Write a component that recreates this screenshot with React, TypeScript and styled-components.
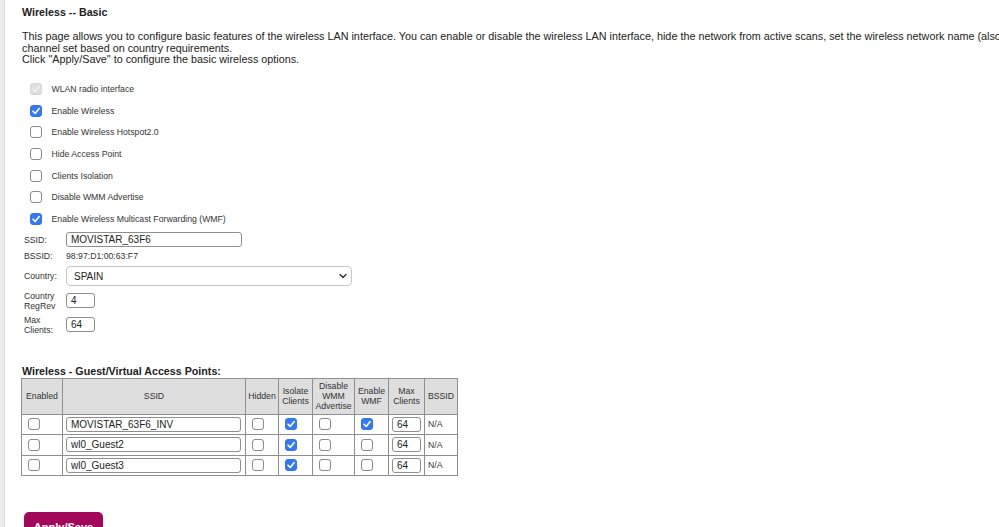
import React from 'react';
import styled, { createGlobalStyle } from 'styled-components';

const Global = createGlobalStyle`
  html, body { margin: 0; padding: 0; background: #fff; overflow: hidden; }
  body { font-family: "Liberation Sans", Arial, sans-serif; }
`;

const Page = styled.div`
  display: flex;
  width: 999px;
  height: 527px;
  overflow: hidden;
`;

const Strip = styled.div`
  width: 4px;
  flex: none;
  background: #ebebee;
  border-right: 1px solid #dcdcdf;
`;

const Main = styled.main`
  flex: 1;
  min-width: 0;
  padding: 5px 0 0 17px;
  display: flex;
  flex-direction: column;
`;

const Title = styled.h1`
  margin: 0;
  font-size: 10.7px;
  line-height: 14px;
  font-weight: bold;
  color: #222;
`;

const Intro = styled.p`
  margin: 12px 0 0;
  font-size: 10.8px;
  line-height: 11.7px;
  white-space: nowrap;
  color: #222;
`;

const CheckList = styled.div`
  margin-top: 12px;
  display: flex;
  flex-direction: column;
`;

const CheckRow = styled.label`
  height: 21.67px;
  display: flex;
  align-items: center;
  gap: 10px;
  padding-left: 7.5px;
  font-size: 8.7px;
  color: #333;
`;

const Box = styled.span<{ $on?: boolean; $disabled?: boolean; $cell?: boolean }>`
  width: 12px;
  height: 12px;
  box-sizing: border-box;
  border-radius: 3px;
  flex: none;
  display: inline-flex;
  align-items: center;
  justify-content: center;
  vertical-align: middle;
  margin-left: ${p => (p.$cell ? '3px' : '0')};
  border: 1px solid ${p => (p.$disabled ? '#d6d6d6' : p.$on ? '#2f74ee' : '#8a8a8a')};
  background: ${p => (p.$disabled ? '#dedede' : p.$on ? '#3478f6' : '#fff')};
`;

const Check: React.FC<{ on?: boolean; disabled?: boolean; cell?: boolean }> = ({ on, disabled, cell }) => (
  <Box $on={on} $disabled={disabled} $cell={cell}>
    {on && (
      <svg width="10" height="10" viewBox="0 0 10 10">
        <path
          d="M2 5.2 L4.2 7.4 L8.2 2.6"
          fill="none"
          stroke={disabled ? '#f4f4f4' : '#fff'}
          strokeWidth="1.6"
          strokeLinecap="round"
          strokeLinejoin="round"
        />
      </svg>
    )}
  </Box>
);

const Form = styled.div`
  margin-top: 1px;
  padding-left: 2px;
  display: grid;
  grid-template-columns: 42px auto;
  grid-template-rows: 18px 14px 26px 24px 24px;
  align-items: center;
  justify-items: start;
`;

const FieldLabel = styled.span`
  font-size: 8.7px;
  line-height: 10px;
  color: #333;
`;

const Value = styled.span`
  font-size: 8.7px;
  color: #333;
`;

const TextBox = styled.input<{ $w: number }>`
  width: ${p => p.$w}px;
  height: 15px;
  box-sizing: border-box;
  border: 1px solid #8e8e8e;
  border-radius: 3px;
  padding: 0 4px;
  font-family: "Liberation Sans", Arial, sans-serif;
  font-size: 10px;
  color: #222;
  background: #fff;
  outline: none;
`;

const SelectWrap = styled.span`
  position: relative;
  display: inline-block;
  width: 286px;
  height: 20px;
`;

const Select = styled.select`
  appearance: none;
  -webkit-appearance: none;
  width: 100%;
  height: 100%;
  box-sizing: border-box;
  border: 1px solid #c9c9c9;
  border-radius: 4px;
  padding: 0 7px;
  font-family: "Liberation Sans", Arial, sans-serif;
  font-size: 10px;
  color: #222;
  background: #fff;
`;

const Chevron = styled.svg`
  position: absolute;
  right: 5px;
  top: 7px;
  pointer-events: none;
`;

const SectionTitle = styled.h2`
  margin: 27px 0 0;
  font-size: 10.7px;
  line-height: 14px;
  font-weight: bold;
  color: #222;
`;

const Table = styled.table`
  margin-left: -1px;
  width: 436px;
  border-collapse: collapse;
  table-layout: fixed;
  font-size: 8.7px;
  color: #333;
`;

const Th = styled.th`
  height: 35px;
  padding: 0;
  background: #dedede;
  border: 1px solid #8f8f8f;
  font-weight: normal;
  line-height: 10px;
  text-align: center;
`;

const Td = styled.td`
  height: 19.5px;
  padding: 0 3px;
  border: 1px solid #8f8f8f;
  white-space: nowrap;
`;

const Button = styled.button`
  margin: 36px 0 0 2px;
  align-self: flex-start;
  width: 79px;
  height: 30px;
  flex: none;
  border: none;
  border-radius: 5px;
  background: #a3085a;
  color: #fff;
  font-family: "Liberation Sans", Arial, sans-serif;
  font-weight: bold;
  font-size: 11px;
`;

const options = [
  { label: 'WLAN radio interface', on: true, disabled: true },
  { label: 'Enable Wireless', on: true },
  { label: 'Enable Wireless Hotspot2.0' },
  { label: 'Hide Access Point' },
  { label: 'Clients Isolation' },
  { label: 'Disable WMM Advertise' },
  { label: 'Enable Wireless Multicast Forwarding (WMF)', on: true },
];

const guests = [
  { ssid: 'MOVISTAR_63F6_INV', isolate: true, wmf: true },
  { ssid: 'wl0_Guest2', isolate: true, wmf: false },
  { ssid: 'wl0_Guest3', isolate: true, wmf: false },
];

export default function App() {
  return (
    <>
      <Global />
      <Page>
        <Strip />
        <Main>
          <Title>Wireless -- Basic</Title>
          <Intro>
            This page allows you to configure basic features of the wireless LAN interface. You can enable or disable the wireless LAN interface, hide the network from active scans, set the wireless network name (also known as SSID) and restrict the
            <br />
            channel set based on country requirements.
            <br />
            Click "Apply/Save" to configure the basic wireless options.
          </Intro>
          <CheckList>
            {options.map(o => (
              <CheckRow key={o.label}>
                <Check on={o.on} disabled={o.disabled} />
                {o.label}
              </CheckRow>
            ))}
          </CheckList>
          <Form>
            <FieldLabel>SSID:</FieldLabel>
            <TextBox $w={176} defaultValue="MOVISTAR_63F6" />
            <FieldLabel>BSSID:</FieldLabel>
            <Value>98:97:D1:00:63:F7</Value>
            <FieldLabel>Country:</FieldLabel>
            <SelectWrap>
              <Select defaultValue="SPAIN">
                <option>SPAIN</option>
              </Select>
              <Chevron width="8" height="6" viewBox="0 0 8 6">
                <path d="M1 1.5 L4 4.5 L7 1.5" fill="none" stroke="#333" strokeWidth="1.4" strokeLinecap="round" strokeLinejoin="round" />
              </Chevron>
            </SelectWrap>
            <FieldLabel>
              Country
              <br />
              RegRev
            </FieldLabel>
            <TextBox $w={29} defaultValue="4" />
            <FieldLabel>
              Max
              <br />
              Clients:
            </FieldLabel>
            <TextBox $w={29} defaultValue="64" />
          </Form>
          <SectionTitle>Wireless - Guest/Virtual Access Points:</SectionTitle>
          <Table>
            <colgroup>
              <col style={{ width: 41 }} />
              <col style={{ width: 183 }} />
              <col style={{ width: 33 }} />
              <col style={{ width: 34 }} />
              <col style={{ width: 42 }} />
              <col style={{ width: 34 }} />
              <col style={{ width: 36 }} />
              <col style={{ width: 33 }} />
            </colgroup>
            <thead>
              <tr>
                <Th>Enabled</Th>
                <Th>SSID</Th>
                <Th>Hidden</Th>
                <Th>
                  Isolate
                  <br />
                  Clients
                </Th>
                <Th>
                  Disable
                  <br />
                  WMM
                  <br />
                  Advertise
                </Th>
                <Th>
                  Enable
                  <br />
                  WMF
                </Th>
                <Th>
                  Max
                  <br />
                  Clients
                </Th>
                <Th>BSSID</Th>
              </tr>
            </thead>
            <tbody>
              {guests.map(g => (
                <tr key={g.ssid}>
                  <Td>
                    <Check cell />
                  </Td>
                  <Td>
                    <TextBox $w={175} defaultValue={g.ssid} />
                  </Td>
                  <Td>
                    <Check cell />
                  </Td>
                  <Td>
                    <Check cell on={g.isolate} />
                  </Td>
                  <Td>
                    <Check cell />
                  </Td>
                  <Td>
                    <Check cell on={g.wmf} />
                  </Td>
                  <Td>
                    <TextBox $w={29} defaultValue="64" />
                  </Td>
                  <Td>N/A</Td>
                </tr>
              ))}
            </tbody>
          </Table>
          <Button>Apply/Save</Button>
        </Main>
      </Page>
    </>
  );
}
